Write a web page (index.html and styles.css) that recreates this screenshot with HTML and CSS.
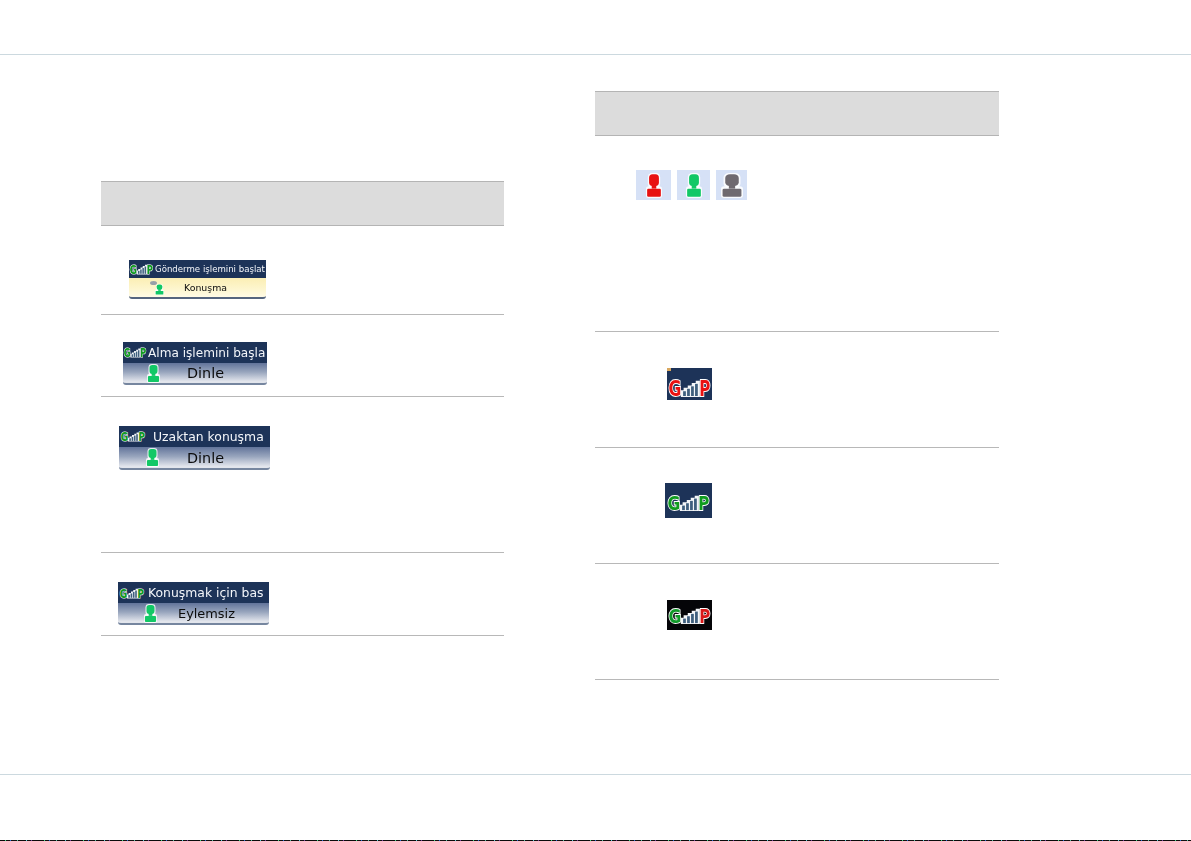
FILE: index.html
```html
<!DOCTYPE html>
<html lang="tr">
<head>
<meta charset="utf-8">
<title>GMP</title>
<link rel="stylesheet" href="styles.css">
</head>
<body>
<svg class="defs" aria-hidden="true">
  <defs>
    <g id="gmp-bars">
      <polygon class="gmp-step" points="8,12.4 8,8 9.6,8 9.6,6.4 12,6.4 12,4.8 14.3,4.8 14.3,3.2 16.6,3.2 16.6,1.8 19,1.8 19,12.4"/>
      <rect class="gmp-bar" x="9.3" y="8.6" width="1.6" height="3.1"/>
      <rect class="gmp-bar" x="11.6" y="7" width="1.6" height="4.7"/>
      <rect class="gmp-bar" x="13.9" y="5.4" width="1.6" height="6.3"/>
      <rect class="gmp-bar" x="16.2" y="3.8" width="1.6" height="7.9"/>
    </g>
  </defs>
  <symbol id="person" viewBox="0 0 14 20" preserveAspectRatio="none">
    <rect class="person-halo" x="0" y="10.6" width="14" height="9.4" rx="2"/>
    <rect class="person-halo" x="1.6" y="0" width="10.8" height="12" rx="3.6"/>
    <rect class="person-fill" x="2.7" y="1" width="8.6" height="9.4" rx="3"/>
    <rect class="person-fill" x="5" y="9.5" width="4" height="3"/>
    <rect class="person-fill" x="1" y="12.6" width="12" height="6.4" rx="1"/>
  </symbol>
</svg>

<div class="page">
  <header class="band-top"></header>
  <main class="sheet">
    <section class="col col-left">
      <div class="table-head"></div>
      <div class="row row-l1">
        <div class="scr scr-a">
          <div class="scr-head">
            <svg class="logo logo-a" viewBox="0 0 26 13" preserveAspectRatio="none"><use href="#gmp-bars"/><text class="gmp-g" x="0.8" y="11.4" textLength="7.4" lengthAdjust="spacingAndGlyphs">G</text><text class="gmp-p" x="18.6" y="11.4" textLength="6.4" lengthAdjust="spacingAndGlyphs">P</text></svg>
            <span class="scr-title">Gönderme işlemini başlat</span>
          </div>
          <div class="scr-body">
            <span class="bubble"></span>
            <svg class="person person-sm person-green"><use href="#person"/></svg>
            <span class="scr-state">Konuşma</span>
          </div>
        </div>
      </div>
      <div class="row row-l2">
        <div class="scr scr-b">
          <div class="scr-head">
            <svg class="logo logo-b" viewBox="0 0 26 13" preserveAspectRatio="none"><use href="#gmp-bars"/><text class="gmp-g" x="0.8" y="11.4" textLength="7.4" lengthAdjust="spacingAndGlyphs">G</text><text class="gmp-p" x="18.6" y="11.4" textLength="6.4" lengthAdjust="spacingAndGlyphs">P</text></svg>
            <span class="scr-title">Alma işlemini başla</span>
          </div>
          <div class="scr-body">
            <svg class="person person-green"><use href="#person"/></svg>
            <span class="scr-state">Dinle</span>
          </div>
        </div>
      </div>
      <div class="row row-l3">
        <div class="scr scr-c">
          <div class="scr-head">
            <svg class="logo logo-c" viewBox="0 0 26 13" preserveAspectRatio="none"><use href="#gmp-bars"/><text class="gmp-g" x="0.8" y="11.4" textLength="7.4" lengthAdjust="spacingAndGlyphs">G</text><text class="gmp-p" x="18.6" y="11.4" textLength="6.4" lengthAdjust="spacingAndGlyphs">P</text></svg>
            <span class="scr-title">Uzaktan konuşma</span>
          </div>
          <div class="scr-body">
            <svg class="person person-green"><use href="#person"/></svg>
            <span class="scr-state">Dinle</span>
          </div>
        </div>
      </div>
      <div class="row row-l4">
        <div class="scr scr-d">
          <div class="scr-head">
            <svg class="logo logo-d" viewBox="0 0 26 13" preserveAspectRatio="none"><use href="#gmp-bars"/><text class="gmp-g" x="0.8" y="11.4" textLength="7.4" lengthAdjust="spacingAndGlyphs">G</text><text class="gmp-p" x="18.6" y="11.4" textLength="6.4" lengthAdjust="spacingAndGlyphs">P</text></svg>
            <span class="scr-title">Konuşmak için bas</span>
          </div>
          <div class="scr-body">
            <svg class="person person-green"><use href="#person"/></svg>
            <span class="scr-state">Eylemsiz</span>
          </div>
        </div>
      </div>
    </section>

    <section class="col col-right">
      <div class="table-head"></div>
      <div class="row row-r1">
        <div class="tiles">
          <div class="tile tile-1"><svg class="person person-tile person-red"><use href="#person"/></svg></div>
          <div class="tile tile-2"><svg class="person person-tile person-green"><use href="#person"/></svg></div>
          <div class="tile tile-3"><svg class="person person-tile-wide person-grey"><use href="#person"/></svg></div>
        </div>
      </div>
      <div class="row row-r2">
        <div class="status status-red">
          <span class="status-dot"></span>
          <svg class="logo logo-big" viewBox="0 0 26 13" preserveAspectRatio="none"><use href="#gmp-bars"/><text class="gmp-g" x="0.8" y="11.4" textLength="7.4" lengthAdjust="spacingAndGlyphs">G</text><text class="gmp-p" x="18.6" y="11.4" textLength="6.4" lengthAdjust="spacingAndGlyphs">P</text></svg>
        </div>
      </div>
      <div class="row row-r3">
        <div class="status status-green">
          <svg class="logo logo-big" viewBox="0 0 26 13" preserveAspectRatio="none"><use href="#gmp-bars"/><text class="gmp-g" x="0.8" y="11.4" textLength="7.4" lengthAdjust="spacingAndGlyphs">G</text><text class="gmp-p" x="18.6" y="11.4" textLength="6.4" lengthAdjust="spacingAndGlyphs">P</text></svg>
        </div>
      </div>
      <div class="row row-r4">
        <div class="status status-black">
          <svg class="logo logo-big" viewBox="0 0 26 13" preserveAspectRatio="none"><use href="#gmp-bars"/><text class="gmp-g" x="0.8" y="11.4" textLength="7.4" lengthAdjust="spacingAndGlyphs">G</text><text class="gmp-p" x="18.6" y="11.4" textLength="6.4" lengthAdjust="spacingAndGlyphs">P</text></svg>
        </div>
      </div>
    </section>
  </main>
  <footer class="band-bottom"><div class="edge"></div></footer>
</div>
</body>
</html>
```

FILE: styles.css
```css
html, body {
  margin: 0;
  padding: 0;
  background: #fff;
  font-family: "DejaVu Sans", sans-serif;
}

.defs {
  position: absolute;
  width: 0;
  height: 0;
}

.page {
  display: flex;
  flex-direction: column;
  height: 841px;
  overflow: hidden;
}

.band-top {
  flex: none;
  height: 54px;
  border-bottom: 1px solid #ccd9df;
}

.sheet {
  flex: none;
  display: flex;
  gap: 91px;
  height: 719px;
  padding-left: 101px;
  box-sizing: border-box;
}

.band-bottom {
  flex: 1;
  display: flex;
  flex-direction: column;
  justify-content: flex-end;
  border-top: 1px solid #ccd9df;
}

.edge {
  height: 1px;
  background: repeating-linear-gradient(90deg,
    #0a0a0a 0 5px, #3ddc84 5px 6px, #101010 6px 10px, #2a6cd8 10px 11px,
    #111 11px 17px, #57c0a0 17px 18px, #0a0a0a 18px 26px, #5ad0d8 26px 27px,
    #111 27px 31px, #7a3fa0 31px 32px, #0a0a0a 32px 39px);
}

.col-left { width: 403px; margin-top: 126px; }
.col-right { width: 404px; margin-top: 36px; }

.table-head {
  height: 45px;
  box-sizing: border-box;
  background: #dcdcdc;
  border-top: 1px solid #b4b4b4;
  border-bottom: 1px solid #b4b4b4;
}

.row {
  box-sizing: border-box;
  border-bottom: 1px solid #b8b8b8;
}

.row-l1 { height: 89px; padding: 34px 0 0 28px; }
.row-l2 { height: 82px; padding: 27px 0 0 21px; }
.row-l3 { height: 156px; padding: 29px 0 0 18px; }
.row-l4 { height: 83px; padding: 29px 0 0 16px; }

.row-r1 { height: 196px; padding: 34px 0 0 41px; }
.row-r2 { height: 116px; padding: 36px 0 0 72px; }
.row-r3 { height: 116px; padding: 35px 0 0 70px; }
.row-r4 { height: 116px; padding: 36px 0 0 72px; }

/* Device screen captures */
.scr {
  position: relative;
  box-sizing: border-box;
  filter: blur(0.4px);
  border-radius: 0 0 3px 3px;
}

.scr-a { width: 137px; height: 39px; }
.scr-b { width: 144px; height: 43px; margin-left: 1px; }
.scr-c { width: 151px; height: 44px; }
.scr-d { width: 151px; height: 43px; margin-left: 1px; }

.scr-head {
  display: flex;
  align-items: center;
  background: #1d3358;
  color: #f4f6fa;
  white-space: nowrap;
}

.scr-a .scr-head { height: 18px; }
.scr-b .scr-head,
.scr-c .scr-head,
.scr-d .scr-head { height: 21px; }

.scr-body {
  position: relative;
  display: flex;
  align-items: center;
  box-sizing: border-box;
  background: linear-gradient(#62749a, #98a5bd 45%, #e2e5ec 92%);
  border-bottom: 2px solid #76869f;
  border-radius: 0 0 3px 3px;
  color: #0c0c0c;
  white-space: nowrap;
}

.scr-a .scr-body {
  height: 21px;
  background: linear-gradient(#fbeeb4, #fdf6cf 60%, #fffbe6);
  border-bottom: 2px solid #55657f;
}
.scr-b .scr-body { height: 22px; }
.scr-c .scr-body { height: 23px; }
.scr-d .scr-body { height: 22px; }

.scr-title, .scr-state { display: block; }

.scr-a .scr-title { font-size: 8.6px; margin-left: 1px; }
.scr-b .scr-title { font-size: 12.1px; margin-left: 1px; }
.scr-c .scr-title { font-size: 12.4px; margin-left: 7px; }
.scr-d .scr-title { font-size: 12.4px; margin-left: 3px; }

.scr-a .scr-state { font-size: 9.4px; margin-left: 20px; }
.scr-b .scr-state { font-size: 14.4px; margin-left: 27px; }
.scr-c .scr-state { font-size: 14.4px; margin-left: 28px; }
.scr-d .scr-state { font-size: 12.9px; margin-left: 21px; }

.logo {
  display: block;
  flex: none;
  overflow: visible;
  --g: #0f9a1e;
  --p: #0f9a1e;
}

.gmp-g, .gmp-p {
  font-family: "DejaVu Sans", sans-serif;
  font-weight: 700;
  font-size: 13.7px;
  stroke: #ffffff;
  stroke-width: 1.3px;
  paint-order: stroke;
}
.gmp-g { fill: var(--g); }
.gmp-p { fill: var(--p); }
.gmp-step { fill: #f4f6f8; }
.gmp-bar { fill: #3f5f7e; }

.logo-a { width: 25px; height: 12px; }
.logo-b { width: 24px; height: 11px; }
.logo-c { width: 26px; height: 11px; margin-left: 1px; }
.logo-d { width: 26px; height: 12px; margin-left: 1px; }

.person { display: block; flex: none; overflow: visible; }
.person-halo { fill: #ffffff; opacity: 0.85; }
.person-fill { fill: var(--c); }
.person-green { --c: #12c866; }
.person-red { --c: #e81212; }
.person-grey { --c: #6f6a70; }

.scr .person { width: 13px; height: 19px; margin-left: 24px; }
.scr-c .person { margin-left: 27px; }
.scr-d .person { margin-left: 26px; }
.scr .person-sm { width: 9px; height: 11px; margin: 3px 0 0 26px; }

.bubble {
  position: absolute;
  left: 21px;
  top: 3px;
  width: 7px;
  height: 4px;
  border-radius: 50%;
  background: #9aa0a8;
}

/* User state tiles */
.tiles { display: flex; gap: 6px; }

.tile {
  display: flex;
  justify-content: center;
  align-items: center;
  height: 30px;
  background: #d6e1f6;
  filter: blur(0.5px);
}

.tile-1 { width: 35px; }
.tile-2 { width: 33px; }
.tile-3 { width: 31px; }

.person-tile { width: 16px; height: 25px; }
.person-tile-wide { width: 22px; height: 25px; }

/* Signal status images */
.status {
  position: relative;
  display: flex;
  align-items: flex-end;
  justify-content: center;
  filter: blur(0.45px);
}

.status-red { width: 45px; height: 32px; background: #1d3358; }
.status-green { width: 47px; height: 35px; background: #1d3358; }
.status-black { width: 45px; height: 30px; background: #050508; }

.status-red .logo { --g: #ea1111; --p: #ea1111; }
.status-black .logo { --g: #119a2a; --p: #d81919; }

.logo-big { width: 45px; height: 19px; margin-bottom: 6px; }
.status-red .logo-big { height: 20px; margin-bottom: 2px; }
.status-black .logo-big { height: 19px; margin-bottom: 5px; }

.status-dot {
  position: absolute;
  left: 0;
  top: 0;
  width: 4px;
  height: 3px;
  background: #d9a860;
}
```
